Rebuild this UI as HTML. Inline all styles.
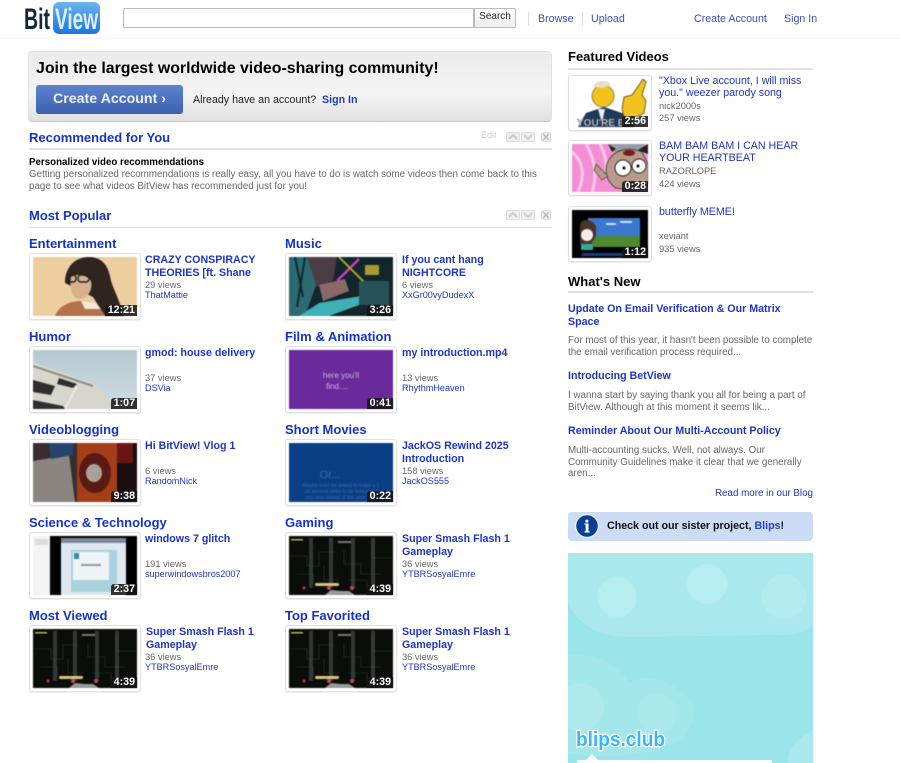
<!DOCTYPE html>
<html><head><meta charset="utf-8"><title>BitView</title>
<style>
html,body{margin:0;padding:0;background:#fff}
body{width:900px;height:763px;position:relative;overflow:hidden;font-family:"Liberation Sans",Arial,sans-serif;color:#000;filter:blur(.25px)}
a{color:#1d36c6;text-decoration:none}
.a{position:absolute;white-space:nowrap}
.h{position:absolute;font-size:13px;font-weight:bold;color:#1533c8;line-height:16px;white-space:nowrap;margin-top:1px}
.card{position:absolute;width:104px;height:59px;padding:3px;border:1px solid #e0e0e0;border-radius:3px;background:#fff;box-shadow:0 1px 1px #eee}
.card svg{display:block;width:100%;height:100%;filter:blur(.5px)}
.card.fc{width:76px;height:48px}
.dur{position:absolute;right:3px;bottom:3px;background:rgba(20,20,20,.85);color:#fff;font-size:10.67px;font-weight:bold;line-height:11px;padding:0 2px 0 3px;border-radius:3px 0 0 0}
.t{position:absolute;font-size:10.67px;font-weight:bold;line-height:12.5px;color:#1d36c6;width:125px;margin-top:1px}
.v{position:absolute;font-size:9.3px;line-height:11px;color:#666;white-space:nowrap}
.u{position:absolute;font-size:9.1px;line-height:11px;color:#1d36c6;white-space:nowrap}
.t ~ .v,.t ~ .u{margin-top:1px}
.ft{position:absolute;left:659px;font-size:10.67px;line-height:11.5px;color:#1d36c6;width:150px;margin-top:1px}
.ft ~ .v{margin-top:0}
.line{position:absolute;background:#e3e3e3}
.sep{position:absolute;width:1px;height:14px;background:#ddd;top:12px}
.nt{position:absolute;left:568px;font-size:10.67px;font-weight:bold;line-height:12.5px;color:#1d36c6;width:245px;margin-top:1px}
.nb{position:absolute;left:568px;font-size:9.8px;line-height:11.6px;color:#666;width:250px;white-space:nowrap;margin-top:1px}
.nav{position:absolute;top:12px;font-size:10.67px;line-height:14px;color:#3a50c0;white-space:nowrap}
.ctl{position:absolute;width:14px;height:10px;border:1px solid #ddd;background:#f0f0f0;border-radius:2px;box-sizing:border-box}
</style></head><body>
<svg width="0" height="0" style="position:absolute"><defs>
<symbol id="game" viewBox="0 0 104 59" preserveAspectRatio="none">
<rect width="104" height="59" fill="#0a0d0a"/>
<path d="M0 20H18V30H30V16H45M55 14V28H72V38H92M8 38H24V48M60 44H78V52H100M35 30V44H50M84 8V22H104" stroke="#1f4a25" stroke-width=".6" fill="none"/>
<rect x="20" y="2" width="4" height="50" fill="#4a504c" opacity=".65"/><rect x="40" y="2" width="4" height="50" fill="#4a504c" opacity=".65"/><rect x="62" y="2" width="4" height="50" fill="#4a504c" opacity=".65"/><rect x="82" y="2" width="4" height="50" fill="#4a504c" opacity=".65"/>
<rect x="2" y="3" width="12" height="1.5" fill="#b8b83a"/><rect x="49" y="5" width="13" height="2" fill="#777"/>
<rect x="26" y="47" width="24" height="3" rx="1.5" fill="#d8c47a"/>
<circle cx="15" cy="52" r="1.5" fill="#c04050"/><circle cx="40" cy="52" r="2" fill="#d04060"/><circle cx="63" cy="52" r="2" fill="#d04060"/>
<path d="M36 59L42 54L52 55L60 55L66 59Z" fill="#999"/>
</symbol>
</defs></svg>

<!-- header -->
<svg class="a" style="left:22px;top:2px" width="80" height="34" viewBox="0 0 80 34">
<defs><linearGradient id="lg" x1="0" y1="0" x2="0" y2="1"><stop offset="0" stop-color="#6fb4ee"/><stop offset=".5" stop-color="#3f94e8"/><stop offset="1" stop-color="#1c78e0"/></linearGradient></defs>
<text x="2" y="27" font-family="Liberation Sans" font-weight="bold" font-size="30" fill="#12293f" textLength="26" lengthAdjust="spacingAndGlyphs">Bit</text>
<rect x="31" y="0" width="47" height="32" rx="6" fill="url(#lg)"/>
<text x="33" y="27" font-family="Liberation Sans" font-weight="bold" font-size="30" fill="#dfeefb" textLength="43" lengthAdjust="spacingAndGlyphs">View</text>
</svg>
<div class="a" style="left:123px;top:8px;width:351px;height:20px;box-sizing:border-box;border:1px solid #bbb;background:#fff;border-radius:2px 0 0 2px"></div>
<div class="a" style="left:474px;top:8px;width:42px;height:20px;box-sizing:border-box;border:1px solid #bbb;background:linear-gradient(#fff,#eee);border-radius:0 2px 2px 0;font-size:10px;line-height:15px;text-align:center;color:#222">Search</div>
<div class="sep" style="left:528px"></div><div class="sep" style="left:582px"></div>
<a class="nav" style="left:538px" href="#">Browse</a>
<a class="nav" style="left:591px" href="#">Upload</a>
<a class="nav" style="left:694px" href="#">Create Account</a>
<a class="nav" style="left:784px" href="#">Sign In</a>
<div class="line" style="left:0;top:38px;width:900px;height:1px;background:#f4f4f4"></div>

<!-- banner -->
<div class="a" style="left:28px;top:51px;width:524px;height:71px;box-sizing:border-box;border:1px solid #e2e2e2;border-bottom:1px solid #c8c8c8;border-radius:4px;background:linear-gradient(#ececec 0,#f4f4f4 60%,#e0e0e0 100%)"></div>
<div class="a" style="left:36px;top:59px;font-size:15.9px;font-weight:bold;line-height:20px">Join the largest worldwide video-sharing community!</div>
<div class="a" style="left:36px;top:85px;width:147px;height:29px;border-radius:3px;background:linear-gradient(#5d84c9,#3b60b0);color:#eef;font-size:14.2px;font-weight:bold;line-height:29px;text-align:center">Create Account ›</div>
<div class="a" style="left:193px;top:93px;font-size:10.67px;line-height:14px;color:#222">Already have an account?</div>
<a class="a" style="left:322px;top:93px;font-size:10.67px;font-weight:bold;line-height:14px;color:#1d40c8" href="#">Sign In</a>

<!-- recommended -->
<div class="h" style="left:29px;top:129px">Recommended for You</div>
<div class="a" style="left:481px;top:130px;font-size:9px;line-height:11px;color:#ccc">Edit</div>
<div class="ctl" style="left:506px;top:132px"><svg width="12" height="8" style="display:block"><path d="M2 6L6 2L10 6" stroke="#ccc" stroke-width="2" fill="none"/></svg></div>
<div class="ctl" style="left:521px;top:132px"><svg width="12" height="8" style="display:block"><path d="M2 2L6 6L10 2" stroke="#ccc" stroke-width="2" fill="none"/></svg></div>
<div class="ctl" style="left:541px;top:132px;width:10px"><svg width="8" height="8" style="display:block"><path d="M1 1L7 7M7 1L1 7" stroke="#bbb" stroke-width="1.5" fill="none"/></svg></div>
<div class="line" style="left:29px;top:148px;width:523px;height:2px"></div>
<div class="a" style="left:29px;top:157px;font-size:9.75px;font-weight:bold;line-height:12px">Personalized video recommendations</div>
<div class="a" style="left:29px;top:169px;font-size:9.8px;line-height:12px;color:#666">Getting personalized recommendations is really easy, all you have to do is watch some videos then come back to this<br>page to see what videos BitView has recommended just for you!</div>

<!-- most popular -->
<div class="h" style="left:29px;top:207px">Most Popular</div>
<div class="ctl" style="left:506px;top:210px"><svg width="12" height="8" style="display:block"><path d="M2 6L6 2L10 6" stroke="#ccc" stroke-width="2" fill="none"/></svg></div>
<div class="ctl" style="left:521px;top:210px"><svg width="12" height="8" style="display:block"><path d="M2 2L6 6L10 2" stroke="#ccc" stroke-width="2" fill="none"/></svg></div>
<div class="ctl" style="left:541px;top:210px;width:10px"><svg width="8" height="8" style="display:block"><path d="M1 1L7 7M7 1L1 7" stroke="#bbb" stroke-width="1.5" fill="none"/></svg></div>
<div class="line" style="left:29px;top:227px;width:523px;height:1px;background:#ddd"></div>

<!-- row 1 -->
<div class="h" style="left:29px;top:235px">Entertainment</div>
<div class="card" style="left:29px;top:253px"><svg viewBox="0 0 104 59" preserveAspectRatio="none"><rect width="104" height="59" fill="#edcf9f"/><path d="M32 26C32 10 42 0 56 0C70 0 76 10 78 24C82 36 88 46 90 59H72L60 40L40 30Z" fill="#2e2420"/><path d="M38 20C44 16 54 18 58 24C60 34 54 42 46 42C40 42 36 32 38 20Z" fill="#d8b08e"/><rect x="33" y="18" width="10" height="7" rx="3" fill="none" stroke="#222" stroke-width="1.4"/><rect x="45" y="18" width="11" height="7" rx="3" fill="none" stroke="#222" stroke-width="1.4"/><path d="M22 59C26 48 38 44 48 44L60 46C66 50 70 54 72 59Z" fill="#b5714a"/><path d="M48 44L62 46L68 52L52 52Z" fill="#f4eadc"/></svg><span class="dur">12:21</span></div>
<div class="t" style="left:145px;top:253px">CRAZY CONSPIRACY THEORIES [ft. Shane</div>
<div class="v" style="left:145px;top:279px">29 views</div><div class="u" style="left:145px;top:289px">ThatMattie</div>

<div class="h" style="left:285px;top:235px">Music</div>
<div class="card" style="left:285px;top:253px"><svg viewBox="0 0 104 59" preserveAspectRatio="none"><rect width="104" height="59" fill="#12262c"/><path d="M0 0H20L30 20L16 59H0Z" fill="#2c6a72"/><path d="M6 0L14 40M16 0L8 50" stroke="#0d2a30" stroke-width="2"/><path d="M18 0H48L44 24L28 30Z" fill="#4a3d44"/><path d="M30 28L56 22L60 34L34 44Z" fill="#8a6a66"/><path d="M10 59L30 46L78 38L70 48L40 59Z" fill="#3fb0b8"/><path d="M48 24L70 2" stroke="#d038c8" stroke-width="2.5"/><path d="M50 0L80 30" stroke="#a8a820" stroke-width="2"/><rect x="70" y="24" width="30" height="24" fill="#28525a"/><rect x="76" y="8" width="14" height="10" fill="#a89a30"/></svg><span class="dur">3:26</span></div>
<div class="t" style="left:402px;top:253px;width:130px">If you cant hang NIGHTCORE</div>
<div class="v" style="left:402px;top:279px">6 views</div><div class="u" style="left:402px;top:289px">XxGr00vyDudexX</div>

<!-- row 2 -->
<div class="h" style="left:29px;top:328px">Humor</div>
<div class="card" style="left:29px;top:346px"><svg viewBox="0 0 104 59" preserveAspectRatio="none"><defs><linearGradient id="sk" x1="0" y1="0" x2="0" y2="1"><stop offset="0" stop-color="#b5c9d2"/><stop offset="1" stop-color="#d0dde0"/></linearGradient></defs><rect width="104" height="59" fill="url(#sk)"/><path d="M0 12L62 34L84 59H0Z" fill="#d6d6cc"/><path d="M0 30L22 36L18 45L0 42ZM26 28L44 34L40 38L24 34ZM0 50L30 56L32 59H0Z" fill="#2e3030"/><path d="M0 16L60 36" stroke="#8c8c84" stroke-width="2"/><path d="M32 59L44 36" stroke="#eee" stroke-width="1.5"/></svg><span class="dur">1:07</span></div>
<div class="t" style="left:145px;top:346px">gmod: house delivery</div>
<div class="v" style="left:145px;top:372px">37 views</div><div class="u" style="left:145px;top:382px">DSVia</div>

<div class="h" style="left:285px;top:328px">Film &amp; Animation</div>
<div class="card" style="left:285px;top:346px"><svg viewBox="0 0 104 59" preserveAspectRatio="none"><rect width="104" height="59" fill="#6a2a9c"/><text x="52" y="28" text-anchor="middle" font-size="8" font-family="Liberation Sans" fill="#c9b3de">here you'll</text><text x="48" y="39" text-anchor="middle" font-size="8" font-family="Liberation Sans" fill="#c9b3de">find....</text></svg><span class="dur">0:41</span></div>
<div class="t" style="left:402px;top:346px;width:130px">my introduction.mp4</div>
<div class="v" style="left:402px;top:372px">13 views</div><div class="u" style="left:402px;top:382px">RhythmHeaven</div>

<!-- row 3 -->
<div class="h" style="left:29px;top:421px">Videoblogging</div>
<div class="card" style="left:29px;top:439px"><svg viewBox="0 0 104 59" preserveAspectRatio="none"><rect width="104" height="59" fill="#2a1a1e"/><rect width="44" height="59" fill="#3a2d30"/><path d="M0 18L36 12L42 59H0Z" fill="#8a8580"/><path d="M16 0H40V12L18 16Z" fill="#274470"/><path d="M44 0H84V59H44Z" fill="#a33e18"/><ellipse cx="62" cy="30" rx="16" ry="20" fill="#5a1a14"/><ellipse cx="61" cy="30" rx="8" ry="9" fill="#aaa09a"/><rect x="84" width="20" height="59" fill="#1a0e12"/><rect x="84" y="0" width="16" height="20" fill="#6a1414"/></svg><span class="dur">9:38</span></div>
<div class="t" style="left:145px;top:439px">Hi BitView! Vlog 1</div>
<div class="v" style="left:145px;top:465px">6 views</div><div class="u" style="left:145px;top:475px">RandomNick</div>

<div class="h" style="left:285px;top:421px">Short Movies</div>
<div class="card" style="left:285px;top:439px"><svg viewBox="0 0 104 59" preserveAspectRatio="none"><rect width="104" height="59" fill="#0b3f85"/><text x="41" y="35" text-anchor="middle" font-size="11" font-family="Liberation Sans" fill="#3d68a0">Or...</text><text x="52" y="44" text-anchor="middle" font-size="5" font-family="Liberation Sans" fill="#3d68a0">Maybe even be asked to make a 1</text><text x="52" y="50" text-anchor="middle" font-size="5" font-family="Liberation Sans" fill="#3d68a0">-30 second video to be featured in</text><text x="52" y="56" text-anchor="middle" font-size="5" font-family="Liberation Sans" fill="#3d68a0">my new rewind of this year too!</text></svg><span class="dur">0:22</span></div>
<div class="t" style="left:402px;top:439px;width:130px">JackOS Rewind 2025 Introduction</div>
<div class="v" style="left:402px;top:465px">158 views</div><div class="u" style="left:402px;top:475px">JackOS555</div>

<!-- row 4 -->
<div class="h" style="left:29px;top:514px">Science &amp; Technology</div>
<div class="card" style="left:29px;top:532px"><svg viewBox="0 0 104 59" preserveAspectRatio="none"><rect width="104" height="59" fill="#000"/><rect width="17" height="59" fill="#f4f4f4"/><rect x="2" y="3" width="13" height="6" fill="#ddd"/><rect x="28" y="2" width="65" height="57" fill="#dfe8ee"/><rect x="28" y="2" width="65" height="5" fill="#7a8a96"/><rect x="38" y="14" width="46" height="42" fill="#a9d2de"/><rect x="40" y="16" width="36" height="28" fill="#eef3f5"/><rect x="41" y="17" width="5" height="6" fill="#3a8aa8"/><rect x="48" y="28" width="20" height="2" fill="#999"/></svg><span class="dur">2:37</span></div>
<div class="t" style="left:145px;top:532px">windows 7 glitch</div>
<div class="v" style="left:145px;top:558px">191 views</div><div class="u" style="left:145px;top:568px">superwindowsbros2007</div>

<div class="h" style="left:285px;top:514px">Gaming</div>
<div class="card" style="left:285px;top:532px"><svg viewBox="0 0 104 59" preserveAspectRatio="none"><use href="#game" width="104" height="59"/></svg><span class="dur">4:39</span></div>
<div class="t" style="left:402px;top:532px;width:130px">Super Smash Flash 1 Gameplay</div>
<div class="v" style="left:402px;top:558px">36 views</div><div class="u" style="left:402px;top:568px">YTBRSosyalEmre</div>

<!-- row 5 -->
<div class="h" style="left:29px;top:607px">Most Viewed</div>
<div class="card" style="left:29px;top:625px"><svg viewBox="0 0 104 59" preserveAspectRatio="none"><use href="#game" width="104" height="59"/></svg><span class="dur">4:39</span></div>
<div class="t" style="left:146px;top:625px;width:130px">Super Smash Flash 1 Gameplay</div>
<div class="v" style="left:145px;top:651px">36 views</div><div class="u" style="left:145px;top:661px">YTBRSosyalEmre</div>

<div class="h" style="left:285px;top:607px">Top Favorited</div>
<div class="card" style="left:285px;top:625px"><svg viewBox="0 0 104 59" preserveAspectRatio="none"><use href="#game" width="104" height="59"/></svg><span class="dur">4:39</span></div>
<div class="t" style="left:402px;top:625px;width:130px">Super Smash Flash 1 Gameplay</div>
<div class="v" style="left:402px;top:651px">36 views</div><div class="u" style="left:402px;top:661px">YTBRSosyalEmre</div>

<!-- right column -->
<div class="a" style="left:568px;top:49px;font-size:13px;font-weight:bold;line-height:16px">Featured Videos</div>
<div class="line" style="left:568px;top:68px;width:245px;height:2px"></div>

<div class="card fc" style="left:568px;top:75px"><svg viewBox="0 0 76 48" preserveAspectRatio="none"><rect width="76" height="48" fill="#fff"/><path d="M6 48L14 34L32 28L44 32L56 36L62 48Z" fill="#1f3a5c"/><path d="M26 30L33 30L30 44Z" fill="#eee"/><circle cx="31" cy="17" r="11" fill="#f2c21e" stroke="#5a4300" stroke-width=".6"/><path d="M21 8C23 1 36 0 39 6L31 9Z" fill="#e4e0c8"/><path d="M50 30L52 18L60 16L71 0L74 3L70 16L74 22L72 34L62 40L52 38Z" fill="#f2c21e" stroke="#5a4300" stroke-width=".8"/><text x="5" y="47" font-family="Liberation Sans" font-weight="bold" font-size="10" fill="#ddd" stroke="#222" stroke-width=".3">YOU'RE BAI</text></svg><span class="dur">2:56</span></div>
<div class="ft" style="top:75px">"Xbox Live account, I will miss you." weezer parody song</div>
<div class="v" style="left:659px;top:101px">nick2000s</div><div class="v" style="left:659px;top:113px">257 views</div>

<div class="card fc" style="left:568px;top:140px"><svg viewBox="0 0 76 48" preserveAspectRatio="none"><rect width="76" height="48" fill="#f48ed4"/><path d="M0 8C10 16 14 30 6 48M14 0C22 14 26 30 20 48M28 0C34 12 36 24 32 34" stroke="#fcc8ec" stroke-width="3" fill="none"/><path d="M36 0H72V14L60 8L46 12Z" fill="#999aa8"/><path d="M36 0L44 5L40 8ZM76 0L66 6L76 10Z" fill="#222"/><path d="M34 26C34 10 52 0 70 8L76 20V40L58 46L44 44C38 40 34 34 34 26Z" fill="#b89a8a" stroke="#332" stroke-width=".8"/><circle cx="51" cy="24" r="8" fill="#fff" stroke="#222"/><circle cx="67" cy="22" r="7" fill="#fff" stroke="#222"/><circle cx="52" cy="24" r="1.5"/><circle cx="66" cy="22" r="1.5"/><ellipse cx="57" cy="9" rx="6" ry="3" fill="#7a1c22"/><path d="M24 20L36 32L30 36L22 26Z" fill="#b89a8a" stroke="#332" stroke-width=".6"/></svg><span class="dur">0:28</span></div>
<div class="ft" style="top:140px">BAM BAM BAM I CAN HEAR YOUR HEARTBEAT</div>
<div class="v" style="left:659px;top:166px">RAZORLOPE</div><div class="v" style="left:659px;top:179px">424 views</div>

<div class="card fc" style="left:568px;top:206px"><svg viewBox="0 0 76 48" preserveAspectRatio="none"><rect width="76" height="48" fill="#000"/><rect x="16" y="8" width="52" height="20" fill="#3b76d0"/><rect x="16" y="26" width="52" height="11" fill="#4d8a2e"/><path d="M34 14h10M48 12h12" stroke="#cfe0f5" stroke-width="2"/><path d="M8 16C8 8 20 8 24 16L24 26L18 36L8 34Z" fill="#4a3528"/><circle cx="15" cy="25" r="6" fill="#f1eee8"/><rect x="9" y="34" width="12" height="6" fill="#2fa8a0"/><rect x="10" y="43" width="46" height="3" fill="#1a3a8a"/></svg><span class="dur">1:12</span></div>
<div class="ft" style="top:206px">butterfly MEME!</div>
<div class="v" style="left:659px;top:231px">xeviant</div><div class="v" style="left:659px;top:244px">935 views</div>

<div class="a" style="left:568px;top:274px;font-size:13px;font-weight:bold;line-height:16px">What's New</div>
<div class="line" style="left:568px;top:291px;width:245px;height:2px"></div>

<div class="nt" style="top:302px">Update On Email Verification &amp; Our Matrix Space</div>
<div class="nb" style="top:334px">For most of this year, it hasn't been possible to complete<br>the email verification process required...</div>
<div class="nt" style="top:369px">Introducing BetView</div>
<div class="nb" style="top:389px">I wanna start by saying thank you all for being a part of<br>BitView. Although at this moment it seems lik...</div>
<div class="nt" style="top:424px">Reminder About Our Multi-Account Policy</div>
<div class="nb" style="top:444px">Multi-accounting sucks. Well, not always. Our<br>Community Guidelines make it clear that we generally<br>aren...</div>
<a class="a" style="right:87px;top:488px;font-size:9.8px;line-height:12px;color:#1d36c6" href="#">Read more in our Blog</a>

<div class="a" style="left:568px;top:512px;width:245px;height:29px;background:#cbdcf4;border-radius:4px"></div>
<svg class="a" style="left:574px;top:513px" width="26" height="26" viewBox="0 0 26 26"><circle cx="13" cy="13" r="11.5" fill="#0a3f96" stroke="#e4ecf8" stroke-width="1.5"/><text x="13" y="19.5" text-anchor="middle" font-family="DejaVu Serif" font-weight="bold" font-size="17" fill="#fff">i</text></svg>
<div class="a" style="left:607px;top:519px;font-size:10.67px;font-weight:bold;line-height:14px;color:#111">Check out our sister project, <a href="#" style="color:#2a44c8">Blips</a>!</div>

<svg class="a" style="left:568px;top:553px" width="245" height="210" viewBox="0 0 245 210">
<rect width="245" height="210" fill="#99e5e9"/>
<path d="M0 0H245V70C240 78 230 82 215 82L60 84C30 84 8 70 0 50Z" fill="#a9e9ed"/>
<circle cx="49" cy="44" r="20" fill="#b5edf0"/><circle cx="139" cy="31" r="20" fill="#b5edf0"/><circle cx="216" cy="44" r="22" fill="#b3ecef"/>
<path d="M0 102C30 100 50 112 62 130C80 118 105 128 125 150C130 170 115 190 95 195C60 205 20 205 0 200Z" fill="#a3e7eb"/>
<circle cx="12" cy="154" r="24" fill="#ade9ed"/><circle cx="89" cy="160" r="20" fill="#a9e9ec"/>
<path d="M245 178C228 185 218 198 220 210H245Z" fill="#a9e9ec"/>
<text x="8" y="193" font-family="Liberation Sans" font-weight="bold" font-size="20" fill="#3ab8f5" stroke="#fff" stroke-width="2.5" paint-order="stroke" textLength="89" lengthAdjust="spacingAndGlyphs">blips.club</text>
<path d="M9 210V207H18L24 201L30 207H204V210Z" fill="#fff"/>
</svg>
</body></html>
